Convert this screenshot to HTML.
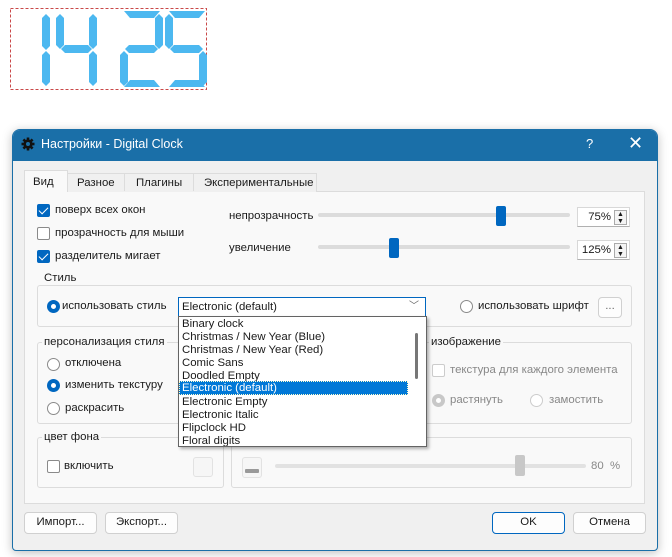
<!DOCTYPE html>
<html><head><meta charset="utf-8"><style>
*{box-sizing:border-box;margin:0;padding:0}
body{width:672px;height:557px;background:#fff;position:relative;overflow:hidden;font-family:"Liberation Sans",sans-serif;font-size:11.4px;color:#1a1a1a}
.a{position:absolute;white-space:nowrap}
.cb{position:absolute;width:13px;height:13px;border:1px solid #8a8a8a;border-radius:2px;background:#fff}
.cb.on{background:#0067c0;border-color:#0067c0}
.cb.on:after{content:"";position:absolute;left:3px;top:0px;width:4px;height:8px;border:solid #fff;border-width:0 1.5px 1.5px 0;transform:rotate(45deg)}
.rd{position:absolute;width:13px;height:13px;border:1px solid #8a8a8a;border-radius:50%;background:#fff}
.rd.on{border:4px solid #0067c0}
.grp{position:absolute;border:1px solid #dcdcdc;border-radius:3px}
.lg{position:absolute;background:#f9f9f9;padding:0 2px;line-height:14px}
.btn{position:absolute;border:1px solid #d0d0d0;border-radius:4px;background:#fdfdfd;text-align:center;line-height:19px}
.trk{position:absolute;height:4px;background:#dcdcdc;border-radius:2px}
.sp{position:absolute;width:53px;height:20px;border:1px solid #d8d8d8;border-bottom-color:#b0b0b0;background:#fff;text-align:right;padding-right:18px;line-height:18px}
.sp i{position:absolute;right:2px;top:2px;width:13px;height:15px;border:1px solid #aaa;background:#f4f4f4;font-style:normal;font-size:7px;line-height:7px;text-align:center}
.li{position:absolute;left:3px;height:13px;line-height:13px;font-size:11.4px}
</style></head><body>
<svg class="a" style="left:0;top:0" width="220" height="95">
<rect x="10.5" y="8.5" width="196" height="81" fill="none" stroke="#c94848" stroke-dasharray="3,2"/>
<g fill="#4cb8f0">
<polygon points="46,14 50,18 50,46 46,50 42,46 42,18"/><polygon points="46,51 50,55 50,82 46,86 42,82 42,55"/>
<polygon points="60,14 64,18 64,45 60,49 56,45 56,18"/><polygon points="61,49 65,45 88,45 92,49 88,53 65,53"/>
<polygon points="93,14 97,18 97,45 93,49 89,45 89,18"/><polygon points="93,51 97,55 97,82 93,86 89,82 89,55"/>
<polygon points="124,11 160,11 154,18 130,18"/><polygon points="159,14 163,18 163,45 159,49 155,45 155,18"/>
<polygon points="125,49 129,45 154,45 158,49 154,53 129,53"/><polygon points="124,51 128,55 128,82 124,86 120,82 120,55"/>
<polygon points="130,80 154,80 160,87 124,87"/>
<polygon points="169,11 205,11 199,18 175,18"/><polygon points="169,14 173,18 173,45 169,49 165,45 165,18"/>
<polygon points="170,49 174,45 199,45 203,49 199,53 174,53"/><polygon points="203,51 207,55 207,82 203,86 199,82 199,55"/>
<polygon points="175,80 199,80 205,87 169,87"/>
</g></svg>

<div class="a" style="left:12px;top:129px;width:646px;height:422px;background:#f0f0f0;border:1px solid #1a6fa8;border-radius:8px 8px 4px 4px;box-shadow:0 2px 10px rgba(0,0,0,.25);overflow:hidden">
<div class="a" style="left:0;top:0;width:646px;height:31px;background:#1a6fa8"></div>
</div>
<svg class="a" style="left:21px;top:137px" width="14" height="14" viewBox="0 0 14 14"><g fill="#111"><circle cx="7" cy="7" r="4.6"/><g stroke="#111" stroke-width="2.6"><line x1="7" y1="0.5" x2="7" y2="13.5"/><line x1="0.5" y1="7" x2="13.5" y2="7"/><line x1="2.4" y1="2.4" x2="11.6" y2="11.6"/><line x1="11.6" y1="2.4" x2="2.4" y2="11.6"/></g></g><circle cx="7" cy="7" r="2" fill="#1a6fa8"/></svg>
<div class="a" style="left:41px;top:137px;color:#fff;font-size:12.5px">Настройки - Digital Clock</div>
<div class="a" style="left:586px;top:136px;color:#fff;font-size:13px">?</div>
<div class="a" style="left:628px;top:133px;color:#fff;font-size:18px;font-weight:300">✕</div>

<div class="a" style="left:24px;top:191px;width:621px;height:313px;background:#f9f9f9;border:1px solid #dcdcdc"></div>
<div class="a" style="left:67px;top:173px;width:250px;height:19px;border:1px solid #dcdcdc;border-bottom:none;background:#f0f0f0"></div>
<div class="a" style="left:124px;top:173px;width:1px;height:18px;background:#dcdcdc"></div>
<div class="a" style="left:193px;top:173px;width:1px;height:18px;background:#dcdcdc"></div>
<div class="a" style="left:24px;top:170px;width:44px;height:22px;border:1px solid #dcdcdc;border-bottom:none;background:#f9f9f9"></div>
<div class="a" style="left:33px;top:176px">Вид</div>
<div class="a" style="left:77px;top:177px">Разное</div>
<div class="a" style="left:136px;top:177px">Плагины</div>
<div class="a" style="left:204px;top:177px">Экспериментальные</div>

<div class="cb on" style="left:37px;top:204px"></div><div class="a" style="left:55px;top:204px">поверх всех окон</div>
<div class="cb" style="left:37px;top:227px"></div><div class="a" style="left:55px;top:227px">прозрачность для мыши</div>
<div class="cb on" style="left:37px;top:250px"></div><div class="a" style="left:55px;top:250px">разделитель мигает</div>

<div class="a" style="left:229px;top:210px">непрозрачность</div>
<div class="trk" style="left:318px;top:213px;width:252px"></div>
<div class="a" style="left:496px;top:206px;width:10px;height:20px;background:#0067c0;border-radius:2px"></div>
<div class="sp" style="left:577px;top:207px">75%<i>▲<br>▼</i></div>
<div class="a" style="left:229px;top:242px">увеличение</div>
<div class="trk" style="left:318px;top:245px;width:252px"></div>
<div class="a" style="left:389px;top:238px;width:10px;height:20px;background:#0067c0;border-radius:2px"></div>
<div class="sp" style="left:577px;top:240px">125%<i>▲<br>▼</i></div>

<div class="grp" style="left:37px;top:285px;width:595px;height:42px"></div>
<div class="lg" style="left:42px;top:271px">Стиль</div>
<div class="rd on" style="left:47px;top:300px"></div><div class="a" style="left:62px;top:300px">использовать стиль</div>
<div class="rd" style="left:460px;top:300px"></div><div class="a" style="left:478px;top:300px">использовать шрифт</div>
<div class="btn" style="left:598px;top:297px;width:24px;height:21px;line-height:16px;color:#666">...</div>

<div class="grp" style="left:37px;top:342px;width:183px;height:82px"></div>
<div class="lg" style="left:42px;top:335px">персонализация стиля</div>
<div class="rd" style="left:47px;top:358px"></div><div class="a" style="left:65px;top:357px">отключена</div>
<div class="rd on" style="left:47px;top:379px"></div><div class="a" style="left:65px;top:379px">изменить текстуру</div>
<div class="rd" style="left:47px;top:402px"></div><div class="a" style="left:65px;top:402px">раскрасить</div>

<div class="grp" style="left:231px;top:342px;width:401px;height:82px"></div>
<div class="lg" style="left:429px;top:335px">изображение</div>
<div class="cb" style="left:432px;top:364px;border-color:#ccc"></div><div class="a" style="left:450px;top:364px;color:#888">текстура для каждого элемента</div>
<div class="rd" style="left:432px;top:394px;border:4px solid #c8c8c8"></div><div class="a" style="left:450px;top:394px;color:#888">растянуть</div>
<div class="rd" style="left:530px;top:394px;border-color:#ccc"></div><div class="a" style="left:549px;top:394px;color:#888">замостить</div>

<div class="grp" style="left:37px;top:437px;width:187px;height:51px"></div>
<div class="lg" style="left:42px;top:430px">цвет фона</div>
<div class="cb" style="left:47px;top:460px"></div><div class="a" style="left:64px;top:460px">включить</div>
<div class="a" style="left:193px;top:457px;width:20px;height:20px;border:1px solid #e2e2e2;border-radius:3px;background:#f6f6f6"></div>

<div class="grp" style="left:231px;top:437px;width:401px;height:51px"></div>
<div class="a" style="left:242px;top:457px;width:20px;height:21px;border:1px solid #e2e2e2;border-radius:3px;background:#f6f6f6"></div>
<div class="a" style="left:245px;top:469px;width:14px;height:4px;background:#999;border-radius:1px"></div>
<div class="trk" style="left:275px;top:464px;width:311px;background:#e2e2e2"></div>
<div class="a" style="left:515px;top:455px;width:10px;height:21px;background:#c8c8c8;border-radius:2px"></div>
<div class="a" style="left:591px;top:460px;color:#888">80 &nbsp;%</div>

<div class="btn" style="left:24px;top:512px;width:73px;height:22px">Импорт...</div>
<div class="btn" style="left:105px;top:512px;width:73px;height:22px">Экспорт...</div>
<div class="btn" style="left:492px;top:512px;width:73px;height:22px;border-color:#0067c0">OK</div>
<div class="btn" style="left:573px;top:512px;width:73px;height:22px">Отмена</div>

<div class="a" style="left:178px;top:297px;width:248px;height:20px;border:1px solid #0067c0;background:#fff;padding-left:3px;line-height:18px">Electronic (default)<span style="position:absolute;right:6px;top:0;color:#666;font-size:10px">﹀</span></div>
<div class="a" style="left:178px;top:316px;width:249px;height:131px;border:1px solid #646464;background:#fff;box-shadow:2px 2px 3px rgba(0,0,0,.3);overflow:hidden">
<div class="li" style="top:1px">Binary clock</div>
<div class="li" style="top:14px">Christmas / New Year (Blue)</div>
<div class="li" style="top:27px">Christmas / New Year (Red)</div>
<div class="li" style="top:40px">Comic Sans</div>
<div class="li" style="top:53px">Doodled Empty</div>
<div class="a" style="left:0;top:64px;width:229px;height:14px;background:#0078d7;border:1px dotted #ffc"></div>
<div class="li" style="top:65px;color:#fff">Electronic (default)</div>
<div class="li" style="top:79px">Electronic Empty</div>
<div class="li" style="top:92px">Electronic Italic</div>
<div class="li" style="top:105px">Flipclock HD</div>
<div class="li" style="top:118px">Floral digits</div>
<div class="a" style="left:236px;top:16px;width:3px;height:46px;background:#777;border-radius:2px"></div>
</div>
</body></html>
